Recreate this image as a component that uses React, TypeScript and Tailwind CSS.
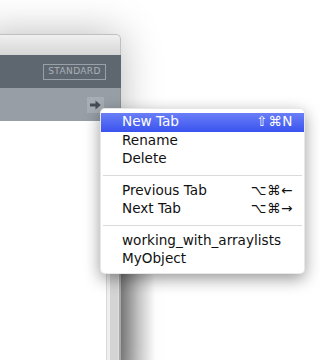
import React from "react";

const font = { fontFamily: '"DejaVu Sans", "Lucida Grande", sans-serif' };

function Row({ label, shortcut, active }: { label: string; shortcut?: string; active?: boolean }) {
  return (
    <div
      className={
        "h-[18.5px] flex items-center justify-between pl-[21px] pr-[11px] text-[13.6px] leading-none " +
        (active ? "bg-gradient-to-b from-[#6b7ef7] to-[#3a52ee] text-white" : "text-[#111111]")
      }
    >
      <span>{label}</span>
      {shortcut && <span className="tracking-[0.5px]">{shortcut}</span>}
    </div>
  );
}

function Sep() {
  return (
    <div className="h-[13px] flex items-center px-[2px]">
      <div className="h-px w-full bg-[#dadada]" />
    </div>
  );
}

export default function App() {
  return (
    <div className="relative w-[320px] h-[360px] bg-white overflow-hidden" style={font}>
      {/* lower right shadow */}
      <div className="absolute left-[121px] top-[110px] bottom-0 w-[34px] bg-gradient-to-r from-[#8a8a8a] via-[#cccccc] to-transparent" />
      {/* window */}
      <div className="absolute left-[-20px] top-[34px] w-[141px] bottom-[-20px] flex flex-col rounded-tr-[5px] shadow-[0_0_40px_rgba(0,0,0,0.28)] bg-white">
        <div className="h-[21px] rounded-tr-[5px] border-t border-r border-[#c0c0c0] bg-gradient-to-b from-[#f0f0f0] to-[#d6d6d6]" />
        <div className="h-[33px] bg-[#5e6770] flex items-center justify-end pr-[15px]">
          <div className="w-[63px] h-[16px] border border-[#98a0a8] flex items-center justify-center text-[9px] leading-none text-[#aab1b8] tracking-[0.4px]">
            STANDARD
          </div>
        </div>
        <div className="h-[33px] bg-[#979ea6] flex items-start justify-end pr-[16px] pt-[9px] border-r border-[#8a9098]">
          <div className="w-[17px] h-[16px] bg-[#a7adb4] flex items-center justify-center">
            <svg width="11" height="10" viewBox="0 0 11 10">
              <path d="M0 3.5h5.5V0.5L10.8 5 5.5 9.5V6.5H0z" fill="#474d55" />
            </svg>
          </div>
        </div>
        <div className="flex-1 flex">
          <div className="flex-1 bg-white" />
          <div className="w-px bg-[#d8d8d8]" />
          <div className="w-[3px] bg-[#efefef]" />
          <div className="w-[8px] bg-[#d4d4d4]" />
          <div className="w-px bg-[#dedede]" />
          <div className="w-[2px] bg-[#a9a9a9]" />
        </div>
      </div>
      {/* menu */}
      <div className="absolute left-[100px] top-[108px] w-[205px] py-[4px] bg-white rounded-[5px] shadow-[0_5px_16px_rgba(0,0,0,0.4)] border border-[#d8d8d8]/60">
        <Row label="New Tab" shortcut="⇧⌘N" active />
        <Row label="Rename" />
        <Row label="Delete" />
        <Sep />
        <Row label="Previous Tab" shortcut="⌥⌘←" />
        <Row label="Next Tab" shortcut="⌥⌘→" />
        <Sep />
        <Row label="working_with_arraylists" />
        <Row label="MyObject" />
      </div>
    </div>
  );
}
